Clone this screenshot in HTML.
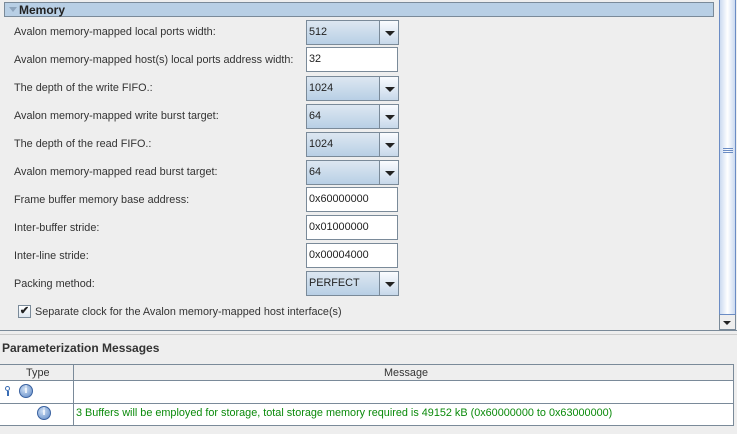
<!DOCTYPE html>
<html><head><style>
*{margin:0;padding:0;box-sizing:border-box}
body{width:737px;height:434px;background:#eeeeee;font-family:"Liberation Sans",sans-serif;font-size:10.85px;color:#333;position:relative;overflow:hidden}
.a{position:absolute}
.hdr{left:4px;top:2px;width:710px;height:15px;background:#b8cfe5;border:1px solid #7a8a99}
.hdr span{position:absolute;left:14px;top:0px;font-weight:bold;font-size:12px;color:#222}
.tri{position:absolute;left:4px;top:4px;width:0;height:0;border-left:4px solid transparent;border-right:4px solid transparent;border-top:5px solid #8ea5bd}
.lbl{left:14px}
.cb{left:306px;width:93px;height:25px;border:1px solid #7a8a99;background:linear-gradient(#dde7f1,#b8cfe5)}
.cb span{position:absolute;left:2px;top:5px;color:#222}
.cb i{position:absolute;right:0;top:0;width:19px;height:23px;border-left:1px solid #7a8a99;background:linear-gradient(#fafcff,#c7d8ea)}
.cb i:after{content:"";position:absolute;left:5px;top:10px;border-left:5px solid transparent;border-right:5px solid transparent;border-top:5px solid #222}
.tf{left:306px;width:92px;height:25px;border:1px solid #7a8a99;background:#fff}
.tf span{position:absolute;left:2px;top:5px;color:#222}
</style></head><body>
<div class="a hdr"><div class="tri"></div><span>Memory</span></div>

<div class="a lbl" style="top:26px">Avalon memory-mapped local ports width:</div>
<div class="a cb" style="top:20px"><span>512</span><i></i></div>
<div class="a lbl" style="top:54px">Avalon memory-mapped host(s) local ports address width:</div>
<div class="a tf" style="top:47px"><span>32</span></div>
<div class="a lbl" style="top:82px">The depth of the write FIFO.:</div>
<div class="a cb" style="top:76px"><span>1024</span><i></i></div>
<div class="a lbl" style="top:110px">Avalon memory-mapped write burst target:</div>
<div class="a cb" style="top:104px"><span>64</span><i></i></div>
<div class="a lbl" style="top:138px">The depth of the read FIFO.:</div>
<div class="a cb" style="top:132px"><span>1024</span><i></i></div>
<div class="a lbl" style="top:166px">Avalon memory-mapped read burst target:</div>
<div class="a cb" style="top:160px"><span>64</span><i></i></div>
<div class="a lbl" style="top:194px">Frame buffer memory base address:</div>
<div class="a tf" style="top:187px"><span>0x60000000</span></div>
<div class="a lbl" style="top:222px">Inter-buffer stride:</div>
<div class="a tf" style="top:215px"><span>0x01000000</span></div>
<div class="a lbl" style="top:250px">Inter-line stride:</div>
<div class="a tf" style="top:243px"><span>0x00004000</span></div>
<div class="a lbl" style="top:278px">Packing method:</div>
<div class="a cb" style="top:271px"><span>PERFECT</span><i></i></div>

<div class="a" style="left:18px;top:305px;width:13px;height:13px;border:1px solid #7a8a99;background:linear-gradient(#fff,#dde7f1);font-size:11px;line-height:11px;text-align:center;color:#222;font-weight:bold">✔</div>
<div class="a" style="left:35px;top:306px">Separate clock for the Avalon memory-mapped host interface(s)</div>

<div class="a" style="left:719px;top:0;width:17px;height:330px;border-left:1px solid #6b8cc4;border-right:1px solid #6b8cc4;background:linear-gradient(90deg,#cbdaf0,#fff 50%,#cbdaf0)"></div>
<div class="a" style="left:723px;top:148px;width:10px;height:1px;background:#6b8cc4;box-shadow:0 2px 0 #6b8cc4,0 4px 0 #6b8cc4"></div>
<div class="a" style="left:719px;top:314px;width:17px;height:16px;border:1px solid #7a8a99;border-top:1px solid #6b8cc4;background:#eee"></div>
<div class="a" style="left:723px;top:321px;border-left:4px solid transparent;border-right:4px solid transparent;border-top:4px solid #222"></div>

<div class="a" style="left:0;top:330px;width:737px;height:1px;background:#7a8a99"></div>
<div class="a" style="left:0;top:334px;width:737px;height:1px;background:#ccc"></div>
<div class="a" style="left:2px;top:341px;font-weight:bold;font-size:12px;color:#333">Parameterization Messages</div>

<div class="a" style="left:0;top:364px;width:734px;height:62px;background:#fff;border-top:1px solid #7a8a99;border-right:1px solid #7a8a99"></div>
<div class="a" style="left:0;top:365px;width:733px;height:16px;background:#eee;border-bottom:1px solid #7a8a99"></div>
<div class="a" style="left:26px;top:367px">Type</div>
<div class="a" style="left:384px;top:367px">Message</div>
<div class="a" style="left:73px;top:365px;width:1px;height:60px;background:#7a8a99"></div>
<div class="a" style="left:0;top:403px;width:734px;height:1px;background:#7a8a99"></div>
<div class="a" style="left:0;top:425px;width:734px;height:1px;background:#7a8a99"></div>
<div class="a" style="left:5px;top:386px;width:5px;height:5px;border-radius:50%;border:1.5px solid #3a6db5"></div>
<div class="a" style="left:7px;top:391px;width:1.5px;height:5px;background:#3a6db5"></div>
<div class="a" style="left:19px;top:384px;width:14px;height:14px;border-radius:50%;background:radial-gradient(circle at 40% 35%,#cfe0f5,#5b86c4);border:1px solid #3a62a0;color:#fff;font-size:10px;font-weight:bold;text-align:center;line-height:12px">i</div>
<div class="a" style="left:37px;top:406px;width:14px;height:14px;border-radius:50%;background:radial-gradient(circle at 40% 35%,#cfe0f5,#5b86c4);border:1px solid #3a62a0;color:#fff;font-size:10px;font-weight:bold;text-align:center;line-height:12px">i</div>
<div class="a" style="left:76px;top:407px;color:#0a8a0a">3 Buffers will be employed for storage, total storage memory required is 49152 kB (0x60000000 to 0x63000000)</div>
</body></html>
